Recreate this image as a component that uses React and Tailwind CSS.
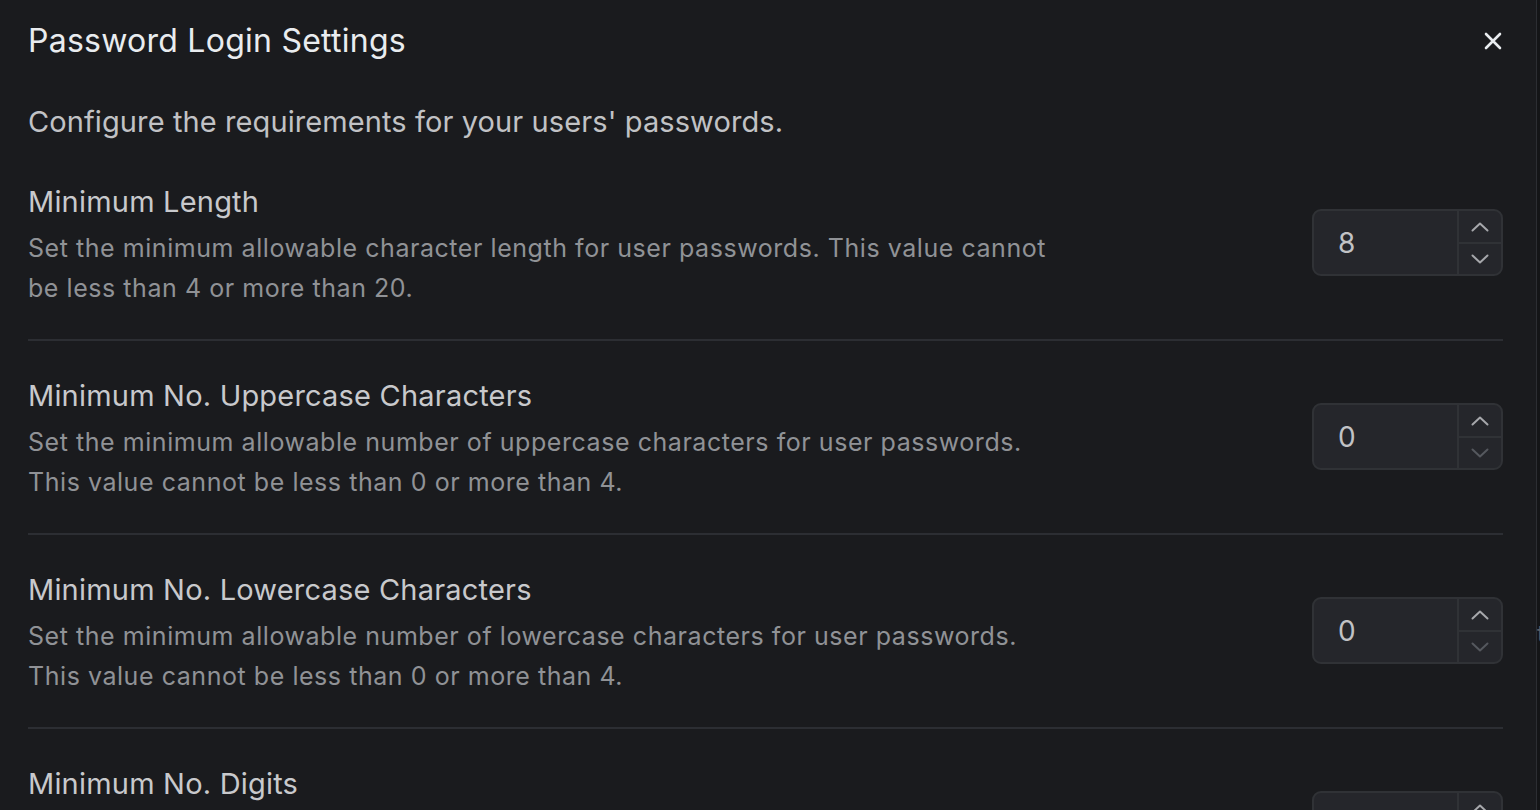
import React from "react";

const rows = [
  {
    label: "Minimum Length",
    desc: "Set the minimum allowable character length for user passwords. This value cannot be less than 4 or more than 20.",
    value: "8",
    downDisabled: false,
  },
  {
    label: "Minimum No. Uppercase Characters",
    desc: "Set the minimum allowable number of uppercase characters for user passwords. This value cannot be less than 0 or more than 4.",
    value: "0",
    downDisabled: true,
  },
  {
    label: "Minimum No. Lowercase Characters",
    desc: "Set the minimum allowable number of lowercase characters for user passwords. This value cannot be less than 0 or more than 4.",
    value: "0",
    downDisabled: true,
  },
  {
    label: "Minimum No. Digits",
    desc: "Set the minimum allowable number of digits for user passwords. This value cannot be less than 0 or more than 4.",
    value: "0",
    downDisabled: true,
  },
];

function Chevron({ up, dim }) {
  return (
    <svg width="20" height="12" viewBox="0 0 20 12" fill="none">
      <path
        d={up ? "M2.5 9.5 L10 2.5 L17.5 9.5" : "M2.5 2.5 L10 9.5 L17.5 2.5"}
        stroke={dim ? "#55585e" : "#a6a7ab"}
        strokeWidth="2"
        strokeLinecap="round"
        strokeLinejoin="round"
      />
    </svg>
  );
}

function NumberInput({ value, downDisabled }) {
  return (
    <div className="flex h-[67px] w-[191px] overflow-hidden rounded-[9px] border-2 border-[#303236] bg-[#25262b]">
      <div className="flex flex-1 items-center pl-[24px] text-[28px] text-[#c1c2c5]">{value}</div>
      <div className="flex w-[44px] flex-col border-l-2 border-[#303236]">
        <div className="flex flex-1 items-center justify-center border-b-2 border-[#303236] pt-[1px]">
          <Chevron up />
        </div>
        <div className="flex flex-1 items-center justify-center">
          <Chevron dim={downDisabled} />
        </div>
      </div>
    </div>
  );
}

export default function App() {
  return (
    <div
      className="flex h-[810px] w-[1540px] overflow-hidden bg-[#141517]"
      style={{ fontFamily: "Inter, 'Noto Sans', sans-serif" }}
    >
      <div className="h-full w-[1536px] shrink-0 bg-[#1a1b1e] pl-[28px] pr-[33px]">
        <div className="flex h-[82px] items-center justify-between">
          <h2 className="text-[32px] tracking-[0.25px] text-[#e9ecef]">Password Login Settings</h2>
          <svg width="22" height="22" viewBox="0 0 22 22" className="mr-[-1px]">
            <path d="M4 4 L18 18 M18 4 L4 18" stroke="#e9ecef" strokeWidth="2.6" strokeLinecap="round" />
          </svg>
        </div>
        <p className="mt-[20px] text-[29px] leading-[40px] tracking-[0.1px] text-[#c1c2c5]">
          Configure the requirements for your users' passwords.
        </p>
        <div className="mt-[40px] flex flex-col">
          {rows.map((r, i) => (
            <div
              key={i}
              className={i < rows.length - 1 ? "mb-[35px] border-b-2 border-[#2c2e33] pb-[31px]" : ""}
            >
              <div className="flex items-start justify-between">
                <div className="w-[1040px]">
                  <div className="text-[29px] leading-[40px] tracking-[0.2px] text-[#c8c9cc]">{r.label}</div>
                  <div className="mt-[6px] text-[25px] leading-[40px] tracking-[0.55px] text-[#909296]">
                    {r.desc}
                  </div>
                </div>
                <div className="mt-[27px]">
                  <NumberInput value={r.value} downDisabled={r.downDisabled} />
                </div>
              </div>
            </div>
          ))}
        </div>
      </div>
      <div className="relative w-[4px] border-l border-[#2c2e33]">
        <span className="absolute left-[0px] top-[616px] text-[24px] text-[#5c5f66]">t</span>
      </div>
    </div>
  );
}
